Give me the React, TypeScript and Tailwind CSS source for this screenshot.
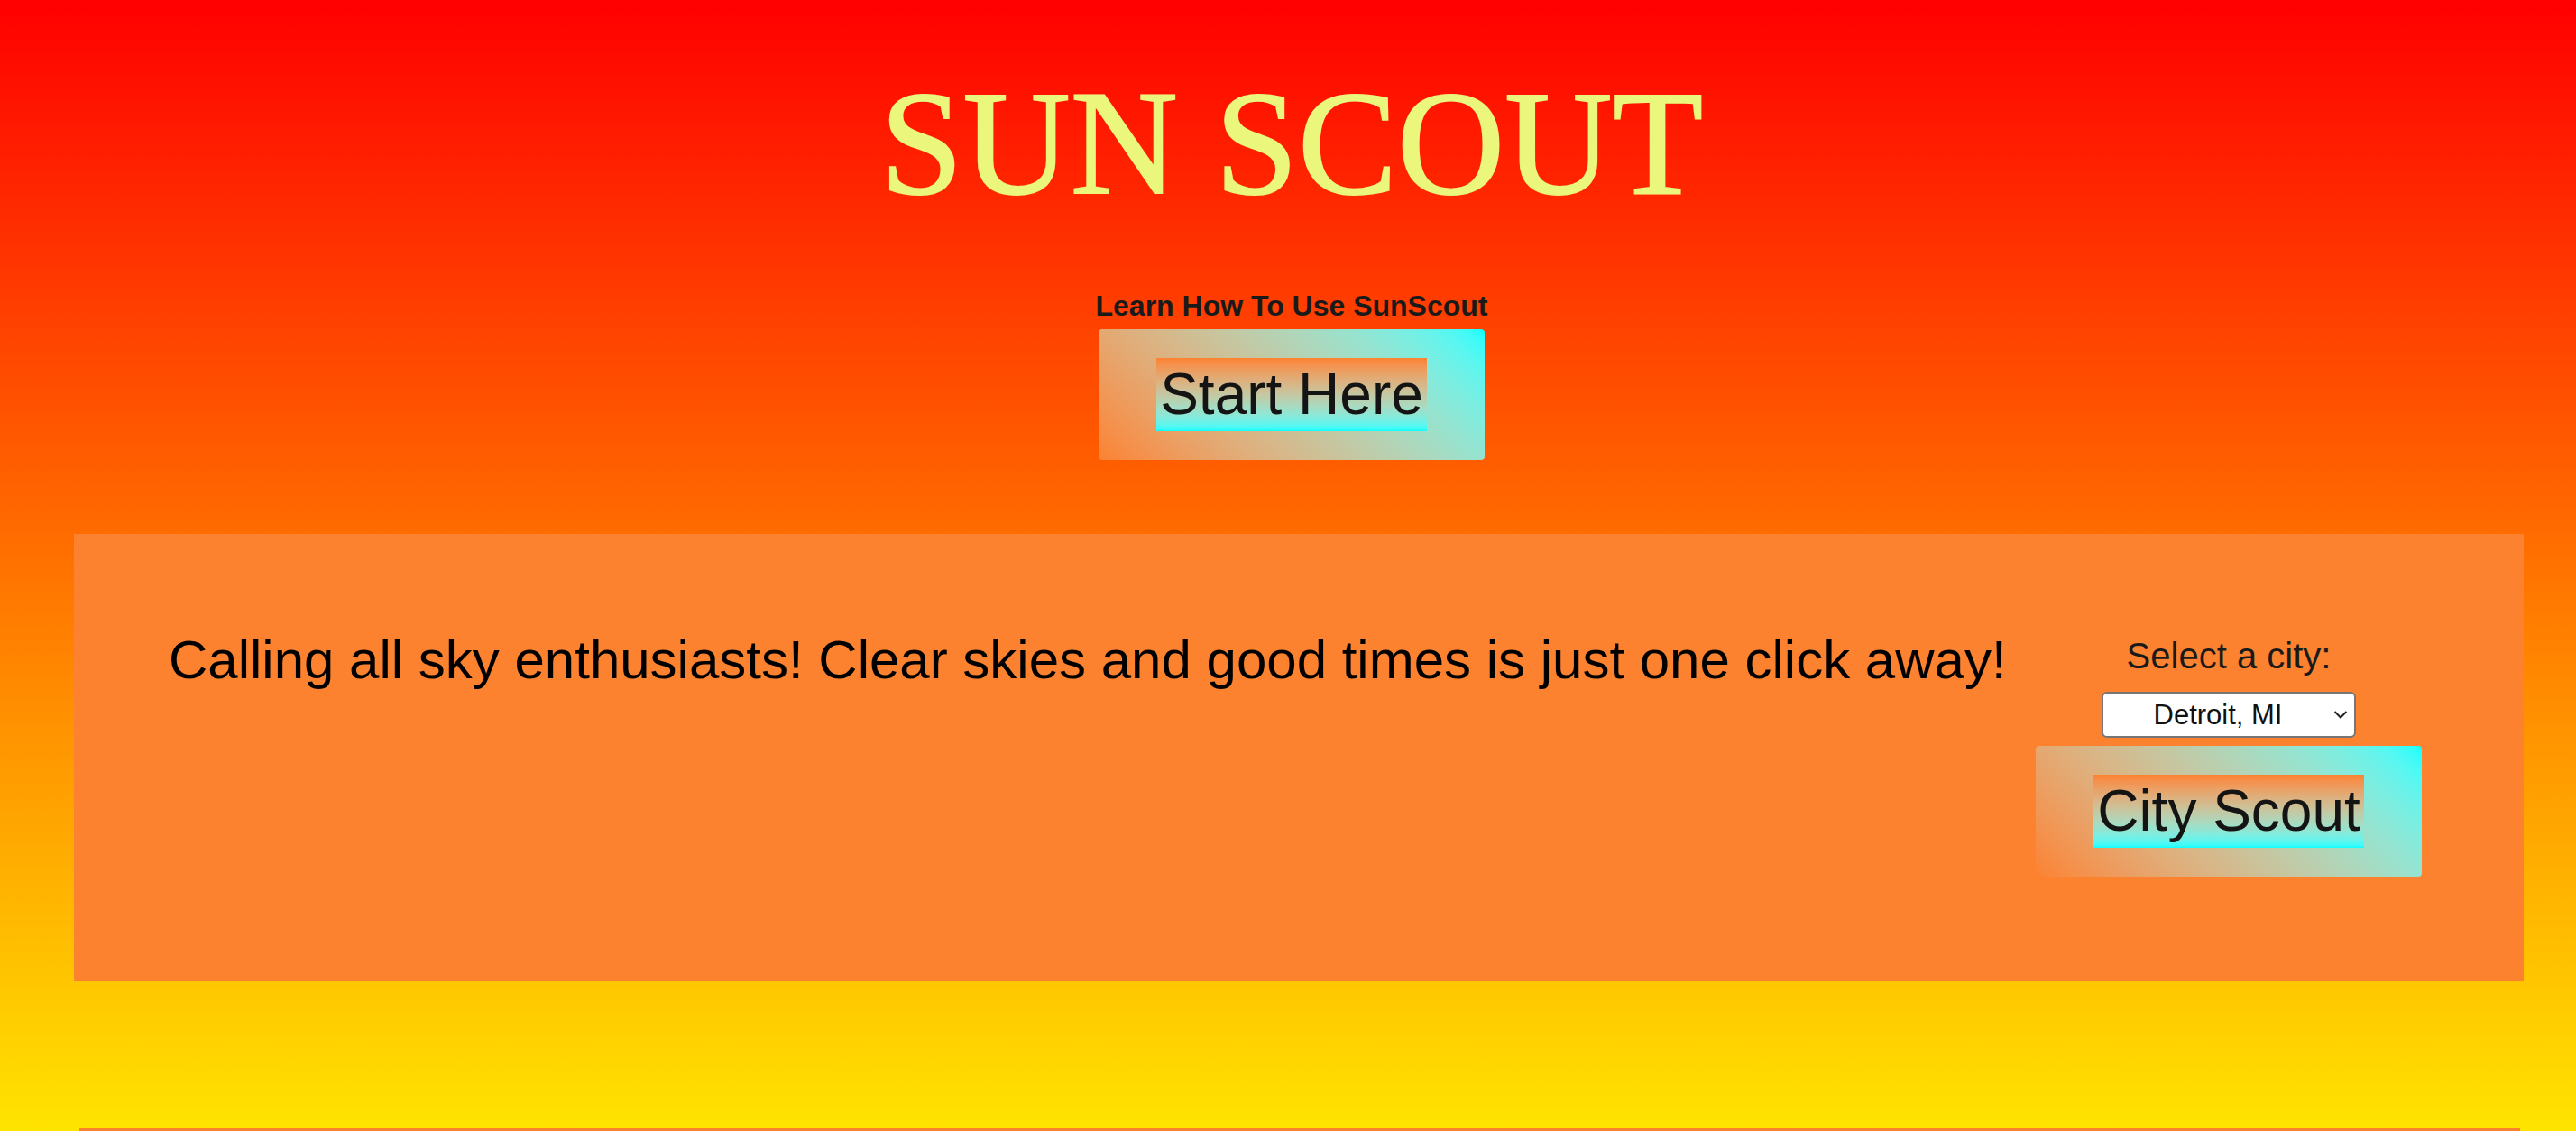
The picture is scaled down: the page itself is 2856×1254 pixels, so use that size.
import { useState } from "react"

const cities = ["Detroit, MI", "Chicago, IL", "Cleveland, OH", "Toledo, OH", "Grand Rapids, MI"]

function ScoutButton({ label, className = "" }: { label: string; className?: string }) {
  return (
    <div className={`rounded-[4px] bg-linear-45 from-[#fc8230] to-[#00ffff] px-[64px] py-[32px] ${className}`}>
      <span className="inline-block bg-linear-to-b from-[#fc8230] to-[#00ffff] px-[4px] py-[4px] text-[64px] leading-[73px] text-[#141414]">
        {label}
      </span>
    </div>
  )
}

export default function App() {
  const [city, setCity] = useState(cities[0])

  return (
    <div className="h-screen overflow-hidden bg-[linear-gradient(to_bottom,#ff0000,#ffe400)] font-['Liberation_Sans',Arial,sans-serif]">
      {/* Header */}
      <header className="flex flex-col items-center pt-[64px] pl-[8px]">
        <h1 className="font-['Liberation_Serif','Times_New_Roman',serif] text-[165px] leading-[190px] font-normal text-[#eaf77c] [-webkit-text-stroke:2px_#eaf77c]">
          SUN SCOUT
        </h1>
        <p className="mt-[67px] text-[32px] font-bold leading-[37px] text-[#1a1a1a]">Learn How To Use SunScout</p>
        <ScoutButton label="Start Here" className="mt-[7px]" />
      </header>

      {/* City picker panel */}
      <section className="mt-[82px] ml-[82px] flex h-[496px] w-[2716px] items-start bg-[#fc8230] pl-[105px] pr-[113px]">
        <p className="flex-1 pt-[105px] text-[60px] leading-[69px] text-black">
          Calling all sky enthusiasts! Clear skies and good times is just one click away!
        </p>
        <div className="mt-[112px] flex w-[428px] flex-col items-center">
          <label htmlFor="city" className="text-[40px] leading-[46px] text-[#1a1a1a]">
            Select a city:
          </label>
          <div className="relative mt-[17px]">
            <select
              id="city"
              value={city}
              onChange={(e) => setCity(e.target.value)}
              className="h-[51px] w-[282px] appearance-none rounded-[6px] border-2 border-[#767676] bg-white pl-[8px] pr-[32px] text-center text-[31px] leading-[36px] text-[#111] [text-align-last:center]"
            >
              {cities.map((c) => (
                <option key={c} value={c}>
                  {c}
                </option>
              ))}
            </select>
            <svg
              className="pointer-events-none absolute right-[9px] top-[20px]"
              width="16"
              height="11"
              viewBox="0 0 16 11"
              fill="none"
            >
              <path d="M1.5 2 L8 8.5 L14.5 2" stroke="#222" strokeWidth="2" />
            </svg>
          </div>
          <ScoutButton label="City Scout" className="mt-[9px]" />
        </div>
      </section>

      <div className="mt-[163px] ml-[88px] h-[20px] w-[2706px] bg-[#fc8230]" />
    </div>
  )
}
